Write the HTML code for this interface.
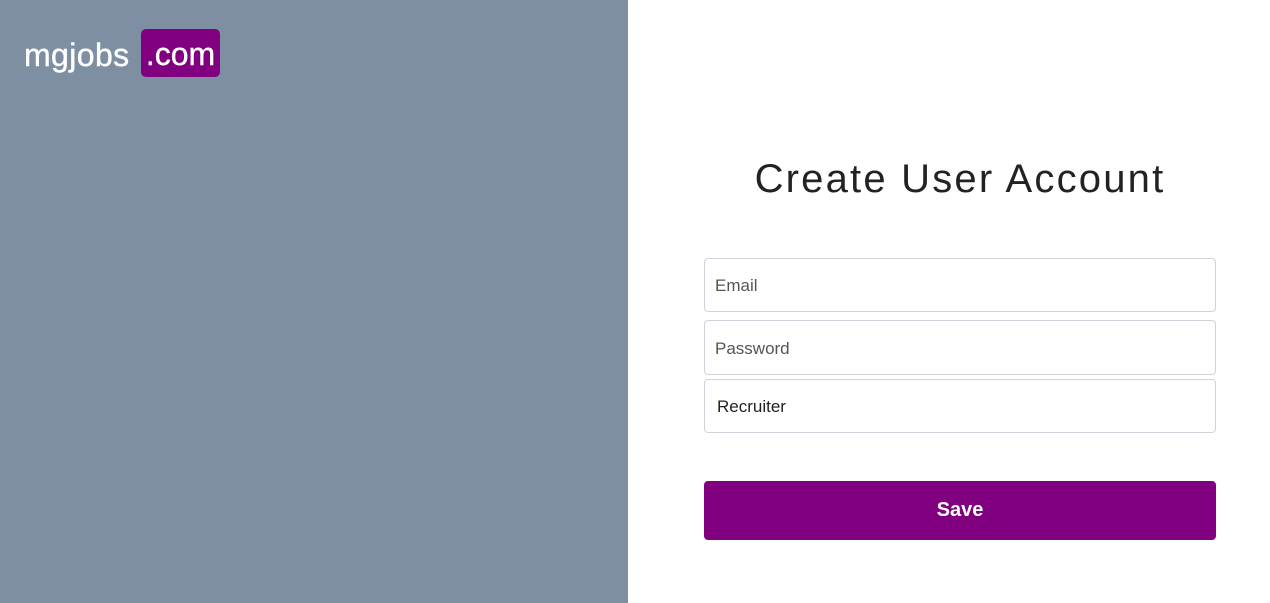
<!DOCTYPE html>
<html><head><style>
html,body{margin:0;padding:0;width:1270px;height:603px;overflow:hidden;font-family:"Liberation Sans",sans-serif;}
.left{position:absolute;left:0;top:0;width:628px;height:603px;background:#7f8fa3;}
.logo{position:absolute;left:24px;top:29px;color:#fff;font-size:32px;font-weight:normal;-webkit-text-stroke:0.4px #fff;letter-spacing:0.4px;}
.logo .t{position:absolute;left:0;top:6px;line-height:40px;}
.logo .c{position:absolute;left:117px;top:0;width:79px;height:48px;background:#800080;border-radius:5px;text-align:center;line-height:50px;letter-spacing:0;}
.right{position:absolute;left:628px;top:0;width:642px;height:603px;background:#fff;}
h1{position:absolute;left:0;width:664px;top:156px;margin:0;text-align:center;font-weight:normal;font-size:40px;line-height:46px;color:#222;letter-spacing:2.2px;}
.in{position:absolute;left:76px;width:510px;height:52px;border:1px solid #ced4da;border-radius:4px;font-size:17px;color:#555;line-height:52px;padding-left:10px;box-sizing:border-box;}
.btn{position:absolute;left:76px;top:481px;width:512px;height:59px;background:#800080;border-radius:4px;color:#fff;font-weight:bold;font-size:20px;text-align:center;line-height:59px;}
</style></head><body>
<div class="left"><div class="logo"><span class="t">mgjobs</span><span class="c">.com</span></div></div>
<div class="right">
<h1>Create User Account</h1>
<div class="in" style="top:258px;width:512px;height:54px;line-height:54px">Email</div>
<div class="in" style="top:320px;width:512px;height:55px;line-height:55px">Password</div>
<div class="in" style="top:379px;width:512px;height:54px;line-height:54px;color:#222;padding-left:12px">Recruiter</div>
<div class="btn">Save</div>
</div>
</body></html>
